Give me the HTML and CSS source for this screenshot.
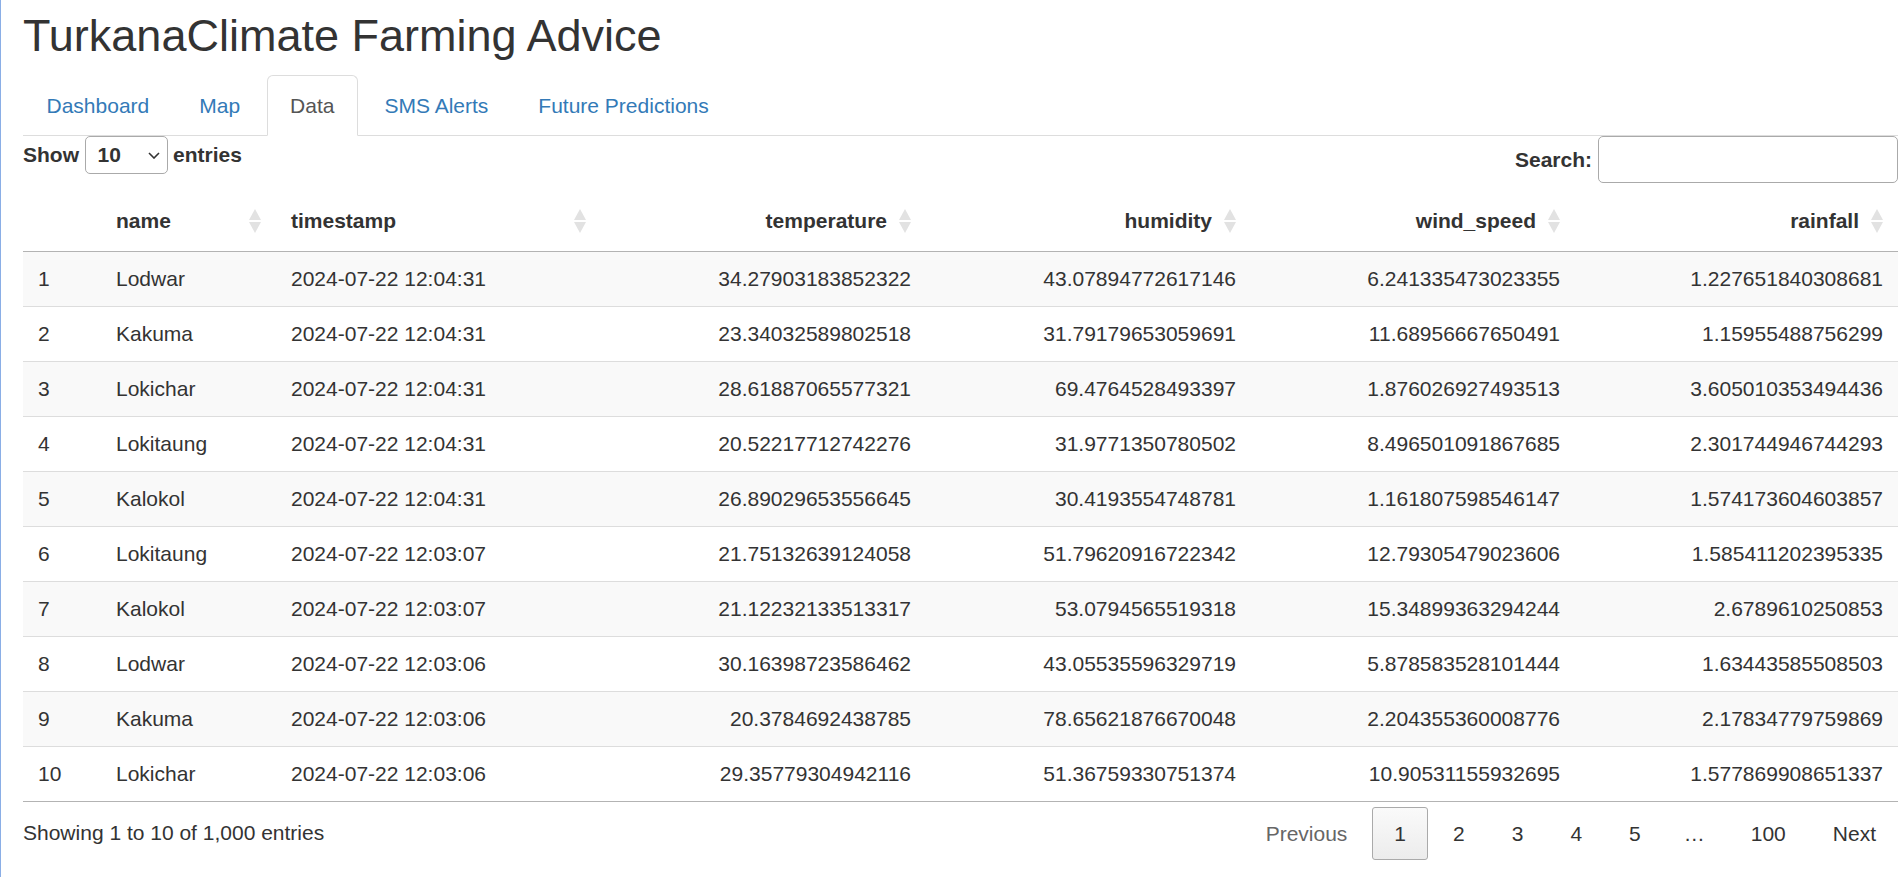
FILE: index.html
```html
<!DOCTYPE html>
<html lang="en">
<head>
<meta charset="utf-8">
<title>TurkanaClimate Farming Advice</title>
<link rel="stylesheet" href="styles.css">
</head>
<body>
<div class="page">
  <h2 class="title">TurkanaClimate Farming Advice</h2>
  <ul class="tabs">
    <li class="tab"><a href="#">Dashboard</a></li>
    <li class="tab"><a href="#">Map</a></li>
    <li class="tab active"><a href="#">Data</a></li>
    <li class="tab"><a href="#">SMS Alerts</a></li>
    <li class="tab"><a href="#">Future Predictions</a></li>
  </ul>
  <div class="dt-wrapper">
    <div class="dt-top">
      <label class="dt-length">Show
        <span class="select-wrap">
          <select class="dt-select"><option>10</option><option>25</option><option>50</option><option>100</option></select>
          <svg class="chevron" width="12" height="7" viewBox="0 0 12 7"><polyline points="1,1 6,6 11,1" fill="none" stroke="#333" stroke-width="1.6"/></svg>
        </span>
        entries</label>
      <label class="dt-filter">Search:<input class="dt-search" type="search"></label>
    </div>
    <table class="dt">
      <colgroup>
        <col class="c-idx"><col class="c-name"><col class="c-wide"><col class="c-wide"><col class="c-wide"><col class="c-wind"><col>
      </colgroup>
      <thead>
        <tr>
          <th class="idx"></th>
          <th class="sorting">name</th>
          <th class="sorting">timestamp</th>
          <th class="sorting num">temperature</th>
          <th class="sorting num">humidity</th>
          <th class="sorting num">wind_speed</th>
          <th class="sorting num">rainfall</th>
        </tr>
      </thead>
      <tbody>
        <tr class="odd"><td>1</td><td>Lodwar</td><td>2024-07-22 12:04:31</td><td class="num">34.27903183852322</td><td class="num">43.07894772617146</td><td class="num">6.241335473023355</td><td class="num">1.227651840308681</td></tr>
        <tr><td>2</td><td>Kakuma</td><td>2024-07-22 12:04:31</td><td class="num">23.34032589802518</td><td class="num">31.79179653059691</td><td class="num">11.68956667650491</td><td class="num">1.15955488756299</td></tr>
        <tr class="odd"><td>3</td><td>Lokichar</td><td>2024-07-22 12:04:31</td><td class="num">28.61887065577321</td><td class="num">69.4764528493397</td><td class="num">1.876026927493513</td><td class="num">3.605010353494436</td></tr>
        <tr><td>4</td><td>Lokitaung</td><td>2024-07-22 12:04:31</td><td class="num">20.52217712742276</td><td class="num">31.9771350780502</td><td class="num">8.496501091867685</td><td class="num">2.301744946744293</td></tr>
        <tr class="odd"><td>5</td><td>Kalokol</td><td>2024-07-22 12:04:31</td><td class="num">26.89029653556645</td><td class="num">30.4193554748781</td><td class="num">1.161807598546147</td><td class="num">1.574173604603857</td></tr>
        <tr><td>6</td><td>Lokitaung</td><td>2024-07-22 12:03:07</td><td class="num">21.75132639124058</td><td class="num">51.79620916722342</td><td class="num">12.79305479023606</td><td class="num">1.585411202395335</td></tr>
        <tr class="odd"><td>7</td><td>Kalokol</td><td>2024-07-22 12:03:07</td><td class="num">21.12232133513317</td><td class="num">53.0794565519318</td><td class="num">15.34899363294244</td><td class="num">2.6789610250853</td></tr>
        <tr><td>8</td><td>Lodwar</td><td>2024-07-22 12:03:06</td><td class="num">30.16398723586462</td><td class="num">43.05535596329719</td><td class="num">5.878583528101444</td><td class="num">1.63443585508503</td></tr>
        <tr class="odd"><td>9</td><td>Kakuma</td><td>2024-07-22 12:03:06</td><td class="num">20.3784692438785</td><td class="num">78.65621876670048</td><td class="num">2.204355360008776</td><td class="num">2.17834779759869</td></tr>
        <tr><td>10</td><td>Lokichar</td><td>2024-07-22 12:03:06</td><td class="num">29.35779304942116</td><td class="num">51.36759330751374</td><td class="num">10.90531155932695</td><td class="num">1.577869908651337</td></tr>
      </tbody>
    </table>
    <div class="dt-bottom">
      <div class="dt-info">Showing 1 to 10 of 1,000 entries</div>
      <div class="dt-paginate">
        <a class="pbtn disabled">Previous</a>
        <a class="pbtn current">1</a>
        <a class="pbtn">2</a>
        <a class="pbtn">3</a>
        <a class="pbtn">4</a>
        <a class="pbtn">5</a>
        <span class="ellipsis">…</span>
        <a class="pbtn">100</a>
        <a class="pbtn">Next</a>
      </div>
    </div>
  </div>
</div>
</body>
</html>
```
FILE: styles.css
```css
* {
  box-sizing: border-box;
}

html, body {
  margin: 0;
  padding: 0;
}

body {
  min-height: 877px;
  font-family: "Liberation Sans", Arial, Helvetica, sans-serif;
  font-size: 21px;
  line-height: 30px;
  color: #333;
  background: #fff;
  border-left: 1px solid #8aaee6;
}

.page {
  padding: 0 5px 0 22px;
}

.title {
  font-size: 45px;
  line-height: 49.5px;
  font-weight: normal;
  margin: 10.5px 0 15px;
  color: #333;
}

.tabs {
  display: flex;
  list-style: none;
  margin: 0;
  padding: 0;
  border-bottom: 1px solid #ddd;
}

.tab {
  margin: 0 3px -1px 0;
}

.tab a {
  display: block;
  padding: 15px 22.5px 14px;
  line-height: 30px;
  border: 1px solid transparent;
  border-radius: 6px 6px 0 0;
  color: #337ab7;
  text-decoration: none;
}

.tab.active a {
  color: #555;
  background: #fff;
  border-color: #ddd #ddd transparent;
}

.dt-top {
  display: flex;
  justify-content: space-between;
  align-items: flex-start;
  height: 47px;
}

.dt-length {
  display: flex;
  align-items: center;
  gap: 5.5px;
  height: 38px;
  font-weight: bold;
}

.select-wrap {
  position: relative;
  display: block;
  width: 83px;
  height: 38px;
}

.dt-select {
  appearance: none;
  -webkit-appearance: none;
  width: 83px;
  height: 38px;
  margin: 0;
  padding: 0 12px;
  font: inherit;
  color: #333;
  background: #fff;
  border: 1px solid #aaa;
  border-radius: 5px;
}

.chevron {
  position: absolute;
  right: 8px;
  top: 16px;
  pointer-events: none;
}

.dt-filter {
  display: flex;
  align-items: center;
  height: 47px;
  font-weight: bold;
}

.dt-search {
  width: 300px;
  height: 47px;
  margin: 0 0 0 6px;
  padding: 0 8px;
  font: inherit;
  font-weight: normal;
  border: 1px solid #aaa;
  border-radius: 5px;
  background: #fff;
}

.dt {
  width: 100%;
  table-layout: fixed;
  border-collapse: separate;
  border-spacing: 0;
  margin-top: 8px;
  border-bottom: 1px solid #b3b3b3;
}

.c-idx { width: 78px; }
.c-name { width: 175px; }
.c-wide { width: 325px; }
.c-wind { width: 324px; }

.dt th {
  position: relative;
  padding: 15px 39px 15px 15px;
  line-height: 30px;
  font-weight: bold;
  text-align: left;
  border-bottom: 1px solid #b3b3b3;
  white-space: nowrap;
}

.dt th.idx {
  padding-right: 15px;
}

.dt th.sorting::before,
.dt th.sorting::after {
  content: "";
  position: absolute;
  right: 15px;
  width: 0;
  height: 0;
  border-left: 6px solid transparent;
  border-right: 6px solid transparent;
}

.dt th.sorting::before {
  top: 18px;
  border-bottom: 11px solid #e2e2e2;
}

.dt th.sorting::after {
  top: 31px;
  border-top: 11px solid #e2e2e2;
}

.dt td {
  padding: 12px 15px;
  line-height: 30px;
  border-top: 1px solid #ddd;
  white-space: nowrap;
}

.dt tbody tr:first-child td {
  border-top: none;
}

.dt tr.odd td {
  background: #f9f9f9;
}

.dt .num {
  text-align: right;
}

.dt-bottom {
  display: flex;
  justify-content: space-between;
  align-items: flex-start;
}

.dt-info {
  padding-top: 15.9px;
}

.dt-paginate {
  display: flex;
  padding-top: 5.25px;
}

.pbtn {
  display: block;
  min-width: 31.5px;
  margin-left: 3px;
  padding: 10.5px 21px;
  line-height: 30px;
  text-align: center;
  color: #333;
  border: 1px solid transparent;
  border-radius: 3px;
  text-decoration: none;
}

.pbtn.disabled {
  color: #666;
}

.pbtn.current {
  border-color: #aaa;
  background: linear-gradient(to bottom, #fafafa 0%, #ececec 100%);
}

.ellipsis {
  display: block;
  padding: 11.5px 21px;
  line-height: 30px;
}
```
